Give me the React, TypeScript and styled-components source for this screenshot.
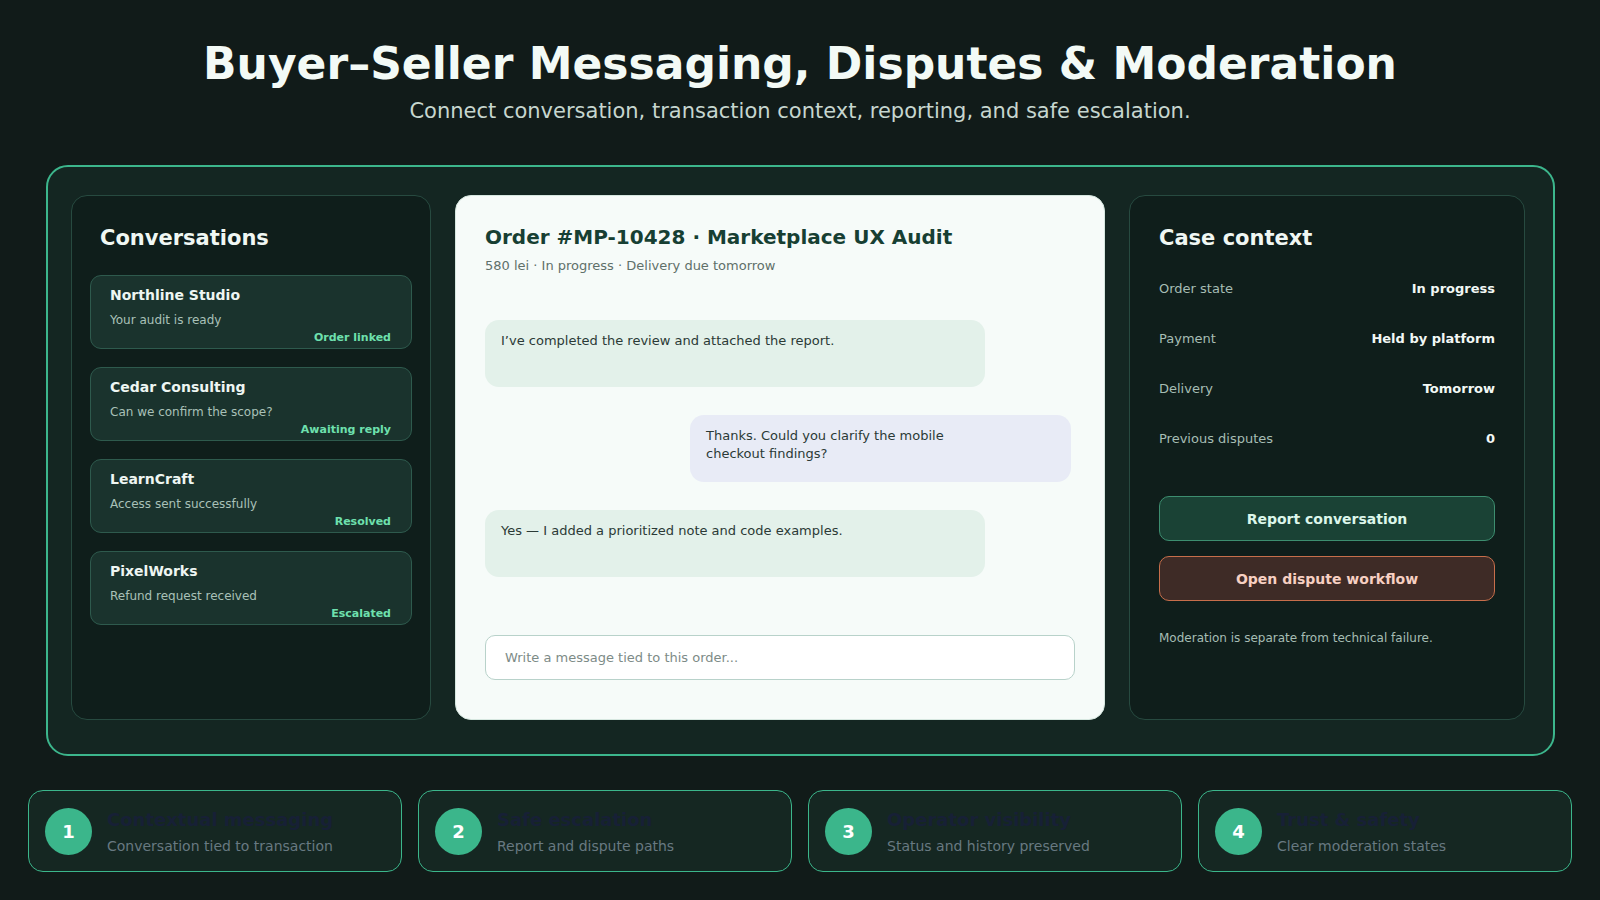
import React from "react";
import styled, { createGlobalStyle } from "styled-components";

const GlobalStyle = createGlobalStyle`
  html, body { margin: 0; padding: 0; background: #111b19; }
  body { font-family: "DejaVu Sans", "Noto Sans", sans-serif; }
  * { box-sizing: border-box; }
`;

const Page = styled.div`
  padding: 38px 28px 20px;
`;

const Header = styled.header`
  text-align: center;
`;

const Title = styled.h1`
  margin: 0;
  font-size: 44px;
  font-weight: 700;
  line-height: normal;
  color: #f3faf6;
`;

const Subtitle = styled.p`
  margin: 10px 0 0;
  font-size: 21px;
  line-height: normal;
  color: #c6d6cf;
`;

const Board = styled.section`
  margin: 42px 17px 0 18px;
  height: 591px;
  border: 2px solid #3cb68c;
  border-radius: 22px;
  background: #142622;
  padding: 28px 28px 34px 23px;
  display: grid;
  grid-template-columns: 360px 650px 1fr;
  grid-template-rows: 525px;
  gap: 24px;
`;

const DarkPanel = styled.div<{ $pad: string }>`
  background: #0f1e1b;
  border: 1px solid #274a40;
  border-radius: 16px;
  padding: ${(p) => p.$pad};
  display: flex;
  flex-direction: column;
`;

const PanelHeading = styled.h2<{ $inset?: number }>`
  margin: 0 ${(p) => p.$inset ?? 0}px;
  font-size: 21px;
  font-weight: 700;
  line-height: normal;
  color: #f0f7f3;
`;

const ConvList = styled.div`
  margin-top: 25px;
  display: flex;
  flex-direction: column;
  gap: 18px;
`;

const ConvItem = styled.div`
  height: 74px;
  background: #1a332d;
  border: 1px solid #2e5a4d;
  border-radius: 11px;
  padding: 11px 20px 0 19px;
  display: flex;
  flex-direction: column;
`;

const ConvName = styled.div`
  font-size: 14px;
  font-weight: 700;
  line-height: normal;
  color: #eef6f2;
`;

const ConvSnippet = styled.div`
  margin-top: 10px;
  font-size: 12px;
  line-height: normal;
  color: #a9c1b8;
`;

const ConvTag = styled.div`
  margin-top: 4px;
  font-size: 11px;
  font-weight: 700;
  line-height: normal;
  color: #6ee0ae;
  text-align: right;
`;

const ChatCard = styled.div`
  background: #f6fbf9;
  border: 1px solid #d6e7e0;
  border-radius: 16px;
  padding: 29px 29px 39px;
  display: flex;
  flex-direction: column;
`;

const OrderTitle = styled.h2`
  margin: 0;
  font-size: 20px;
  font-weight: 700;
  line-height: normal;
  color: #173f33;
`;

const OrderMeta = styled.div`
  margin-top: 9px;
  font-size: 13px;
  line-height: normal;
  color: #5f706a;
`;

const Messages = styled.div`
  margin-top: 47px;
  display: flex;
  flex-direction: column;
  gap: 28px;
`;

const Bubble = styled.div<{ $own?: boolean }>`
  height: 67px;
  width: ${(p) => (p.$own ? "381px" : "500px")};
  align-self: ${(p) => (p.$own ? "flex-end" : "flex-start")};
  margin-right: ${(p) => (p.$own ? "4px" : "0")};
  background: ${(p) => (p.$own ? "#e8ebf6" : "#e3f1ea")};
  border-radius: 14px;
  padding: 12px 16px;
  font-size: 13px;
  line-height: 1.4;
  color: #2b3a36;
`;

const BubbleText = styled.span<{ $wrap?: number }>`
  display: block;
  max-width: ${(p) => (p.$wrap ? `${p.$wrap}px` : "none")};
`;

const Composer = styled.input`
  margin-top: auto;
  height: 45px;
  width: 100%;
  border: 1px solid #b8d2ca;
  border-radius: 10px;
  background: #ffffff;
  padding: 0 19px;
  font-family: "DejaVu Sans", sans-serif;
  font-size: 13px;
  color: #2b3a36;
  outline: none;
  &::placeholder { color: #7d8b87; }
`;

const InfoRows = styled.div`
  margin-top: 13px;
  display: flex;
  flex-direction: column;
`;

const InfoRow = styled.div`
  height: 50px;
  display: flex;
  align-items: center;
  justify-content: space-between;
  font-size: 13px;
`;

const InfoLabel = styled.span`
  color: #a6bdb4;
`;

const InfoValue = styled.span`
  font-weight: 700;
  color: #f2f8f5;
`;

const Actions = styled.div`
  margin-top: 33px;
  display: flex;
  flex-direction: column;
  gap: 15px;
`;

const ActionButton = styled.button<{ $tone: "report" | "dispute" }>`
  height: 45px;
  width: 100%;
  border-radius: 10px;
  border: 1px solid ${(p) => (p.$tone === "report" ? "#3d8e70" : "#c76e4b")};
  background: ${(p) => (p.$tone === "report" ? "#1a4235" : "#3e2b26")};
  color: ${(p) => (p.$tone === "report" ? "#dcf6ea" : "#f7d0c2")};
  font-family: "DejaVu Sans", sans-serif;
  font-size: 14px;
  font-weight: 700;
  cursor: pointer;
`;

const Note = styled.p`
  margin: 30px 0 0;
  font-size: 12px;
  line-height: normal;
  color: #a6bdb4;
`;

const Features = styled.div`
  margin-top: 34px;
  display: grid;
  grid-template-columns: repeat(4, 1fr);
  gap: 16px;
`;

const FeatureCard = styled.div`
  height: 82px;
  border: 1px solid #3bb68b;
  border-radius: 15px;
  background: #152722;
  padding: 0 16px;
  display: flex;
  align-items: center;
  gap: 15px;
`;

const StepCircle = styled.div`
  width: 47px;
  height: 47px;
  flex: none;
  border-radius: 50%;
  background: #3bb68b;
  color: #ffffff;
  font-size: 18px;
  font-weight: 700;
  display: flex;
  align-items: center;
  justify-content: center;
`;

const FeatureText = styled.div`
  display: flex;
  flex-direction: column;
`;

const FeatureTitle = styled.div`
  font-size: 18px;
  font-weight: 700;
  line-height: normal;
  color: #172036;
`;

const FeatureSub = styled.div`
  margin-top: 8px;
  font-size: 14px;
  line-height: normal;
  color: #687981;
`;

const conversations = [
  { name: "Northline Studio", snippet: "Your audit is ready", tag: "Order linked" },
  { name: "Cedar Consulting", snippet: "Can we confirm the scope?", tag: "Awaiting reply" },
  { name: "LearnCraft", snippet: "Access sent successfully", tag: "Resolved" },
  { name: "PixelWorks", snippet: "Refund request received", tag: "Escalated" },
];

const caseRows = [
  ["Order state", "In progress"],
  ["Payment", "Held by platform"],
  ["Delivery", "Tomorrow"],
  ["Previous disputes", "0"],
];

const features = [
  ["Contextual messaging", "Conversation tied to transaction"],
  ["Safe escalation", "Report and dispute paths"],
  ["Operator visibility", "Status and history preserved"],
  ["Trust & safety", "Clear moderation states"],
];

export default function App() {
  return (
    <>
      <GlobalStyle />
      <Page>
        <Header>
          <Title>Buyer–Seller Messaging, Disputes &amp; Moderation</Title>
          <Subtitle>Connect conversation, transaction context, reporting, and safe escalation.</Subtitle>
        </Header>

        <Board>
          <DarkPanel $pad="30px 18px 28px">
            <PanelHeading $inset={10}>Conversations</PanelHeading>
            <ConvList>
              {conversations.map((c) => (
                <ConvItem key={c.name}>
                  <ConvName>{c.name}</ConvName>
                  <ConvSnippet>{c.snippet}</ConvSnippet>
                  <ConvTag>{c.tag}</ConvTag>
                </ConvItem>
              ))}
            </ConvList>
          </DarkPanel>

          <ChatCard>
            <OrderTitle>Order #MP-10428 · Marketplace UX Audit</OrderTitle>
            <OrderMeta>580 lei · In progress · Delivery due tomorrow</OrderMeta>
            <Messages>
              <Bubble>
                <BubbleText>I’ve completed the review and attached the report.</BubbleText>
              </Bubble>
              <Bubble $own>
                <BubbleText $wrap={270}>Thanks. Could you clarify the mobile checkout findings?</BubbleText>
              </Bubble>
              <Bubble>
                <BubbleText>Yes — I added a prioritized note and code examples.</BubbleText>
              </Bubble>
            </Messages>
            <Composer placeholder="Write a message tied to this order..." />
          </ChatCard>

          <DarkPanel $pad="30px 29px 29px">
            <PanelHeading>Case context</PanelHeading>
            <InfoRows>
              {caseRows.map(([label, value]) => (
                <InfoRow key={label}>
                  <InfoLabel>{label}</InfoLabel>
                  <InfoValue>{value}</InfoValue>
                </InfoRow>
              ))}
            </InfoRows>
            <Actions>
              <ActionButton $tone="report">Report conversation</ActionButton>
              <ActionButton $tone="dispute">Open dispute workflow</ActionButton>
            </Actions>
            <Note>Moderation is separate from technical failure.</Note>
          </DarkPanel>
        </Board>

        <Features>
          {features.map(([title, sub], i) => (
            <FeatureCard key={title}>
              <StepCircle>{i + 1}</StepCircle>
              <FeatureText>
                <FeatureTitle>{title}</FeatureTitle>
                <FeatureSub>{sub}</FeatureSub>
              </FeatureText>
            </FeatureCard>
          ))}
        </Features>
      </Page>
    </>
  );
}
